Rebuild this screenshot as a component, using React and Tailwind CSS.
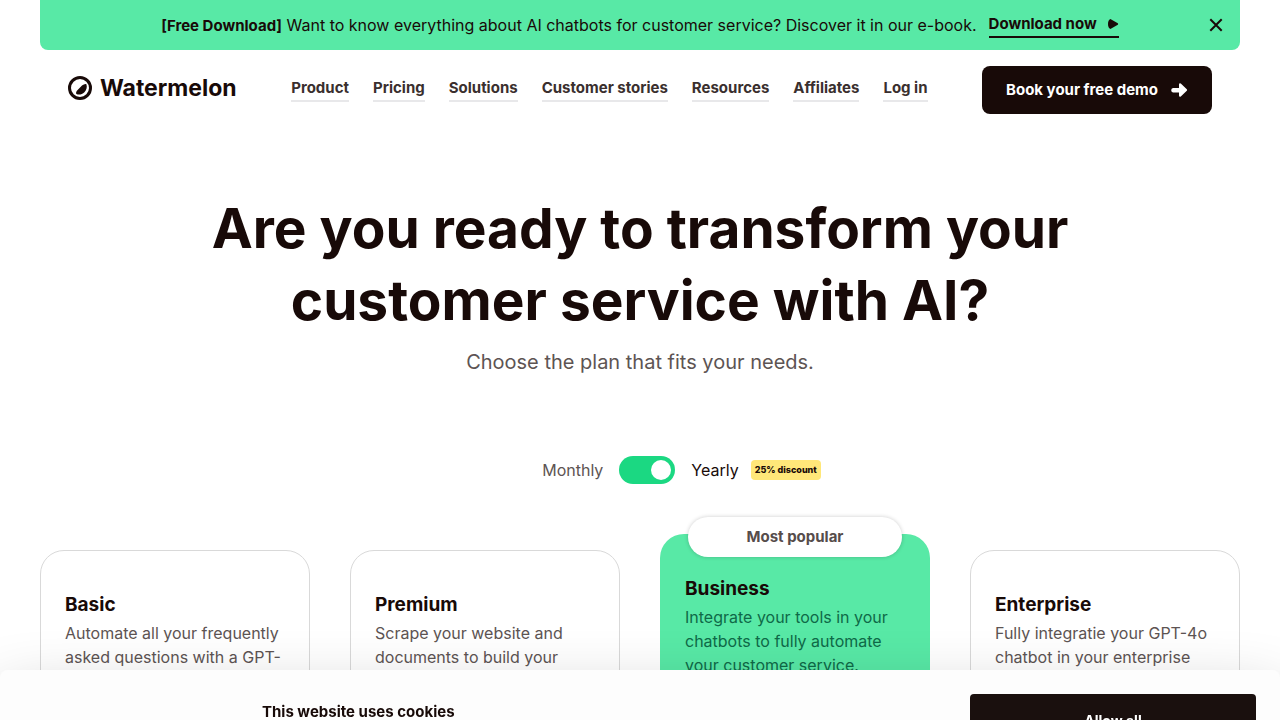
import { useState } from 'react';

const navLinks = ['Product', 'Pricing', 'Solutions', 'Customer stories', 'Resources', 'Affiliates', 'Log in'];

const plans = [
  { name: 'Basic', lines: ['Automate all your frequently', 'asked questions with a GPT-'] },
  { name: 'Premium', lines: ['Scrape your website and', 'documents to build your'] },
  { name: 'Business', lines: ['Integrate your tools in your', 'chatbots to fully automate', 'your customer service.'], popular: true },
  { name: 'Enterprise', lines: ['Fully integratie your GPT-4o', 'chatbot in your enterprise'] },
];

function Banner({ onClose }) {
  return (
    <div className="mx-10 h-[50px] flex items-center bg-[#58e9a6] rounded-b-lg px-4">
      <div className="flex-1 flex items-center justify-center gap-3 pl-4 whitespace-nowrap">
        <p className="text-base leading-6"><strong className="text-[15px] font-bold">[Free Download]</strong> Want to know everything about AI chatbots for customer service? Discover it in our e-book.</p>
        <a href="#download" className="flex items-center gap-2.5 font-bold text-[15px] leading-6 border-b-2 border-[#180a08]">
          Download now
          <svg width="12" height="12" viewBox="0 0 12 12" fill="currentColor" aria-hidden="true">
            <path d="M3.4 1 L10.8 5.3 Q11.6 6 10.8 6.7 L3.4 11 Q1 10 1 6 Q1 2 3.4 1Z" />
          </svg>
        </a>
      </div>
      <button type="button" aria-label="Close" onClick={onClose} className="w-4 h-4 flex items-center justify-center">
        <svg width="14" height="14" viewBox="0 0 14 14" stroke="currentColor" strokeWidth="2" aria-hidden="true">
          <path d="M1.3 1.3 L12.7 12.7 M12.7 1.3 L1.3 12.7" />
        </svg>
      </button>
    </div>
  );
}

function Header() {
  return (
    <header className="mx-10 px-7 py-4 flex items-center justify-between whitespace-nowrap">
      <a href="#home" className="flex items-center gap-2 pb-1">
        <svg width="24" height="24" viewBox="0 0 24 24" aria-hidden="true">
          <circle cx="12" cy="12" r="10.5" fill="none" stroke="#180a08" strokeWidth="3" />
          <path d="M18.4 8.2 C19.4 11 18.4 14.2 16.4 16.2 C14.2 18.4 11 19.2 8.4 18 C7.6 17 8.2 15.4 9.6 14 L14 9.6 C15.6 8.2 17.6 7.4 18.4 8.2Z" fill="#180a08" />
        </svg>
        <span className="text-[23px] leading-6 font-bold">Watermelon</span>
      </a>
      <nav className="flex gap-6 pb-0.5">
        {navLinks.map(link => (
          <a key={link} href="#nav" className="text-[15px] leading-6 font-bold text-[#3a2f2e] border-b-2 border-[#e8e8ea]">{link}</a>
        ))}
      </nav>
      <a href="#demo" className="h-12 px-6 flex items-center gap-3 rounded-lg bg-[#180a08] text-white font-bold text-[15px]">
        Book your free demo
        <svg width="18" height="16" viewBox="0 0 18 16" fill="currentColor" aria-hidden="true">
          <path d="M3 6 H9 V2.4 Q9.2 0.6 10.8 1.4 L16.8 7.3 Q17.5 8 16.8 8.7 L10.8 14.6 Q9.2 15.4 9 13.6 V10.4 H3 Q1.2 10.2 1.2 8.2 Q1.2 6.2 3 6Z" />
        </svg>
      </a>
    </header>
  );
}

function PlanCard({ plan }) {
  if (plan.popular) {
    return (
      <article className="relative -mt-4 rounded-3xl bg-[#58e9a6] px-[25px] pt-[39px] pb-24">
        <span className="absolute -top-[17px] inset-x-7 h-10 flex items-center justify-center rounded-full bg-white text-[#564c4b] font-bold text-[15px] shadow-[0_0_4px_rgba(0,0,0,0.2)]">Most popular</span>
        <h2 className="text-[19px] leading-8 font-bold">{plan.name}</h2>
        <p className="text-base leading-6 text-[#0f6a48] whitespace-nowrap">
          {plan.lines.map(line => <span key={line} className="block">{line}</span>)}
        </p>
      </article>
    );
  }
  return (
    <article className="rounded-3xl border border-[#d9d9d9] bg-white px-6 pt-[38px] pb-24">
      <h2 className="text-[19px] leading-8 font-bold">{plan.name}</h2>
      <p className="text-base leading-6 text-[#5d5453] whitespace-nowrap">
        {plan.lines.map(line => <span key={line} className="block">{line}</span>)}
      </p>
    </article>
  );
}

function CookieBar() {
  return (
    <section aria-label="Cookies" className="fixed inset-x-0 -bottom-48 h-[242px] rounded-t-lg bg-[#fdfdfd] shadow-[0_32px_68px_rgba(0,0,0,0.3)] px-6 pt-6">
      <div className="flex items-start justify-between">
        <h2 className="pl-[238px] pt-2 text-[15px] leading-5 font-bold">This website uses cookies</h2>
        <button type="button" className="w-[286px] h-[54px] rounded bg-[#1a100e] text-white text-sm font-bold">Allow all</button>
      </div>
    </section>
  );
}

export default function App() {
  const [showBanner, setShowBanner] = useState(true);
  const [yearly, setYearly] = useState(true);

  return (
    <div className="min-h-screen bg-white text-[#180a08] font-['Inter','Liberation_Sans',sans-serif]">
      {showBanner && <Banner onClose={() => setShowBanner(false)} />}
      <Header />
      <main className="px-10 pt-[62px]">
        <h1 className="mx-auto max-w-[920px] text-center text-[55px] leading-[72px] font-bold">
          Are you ready to transform your <br />customer service with AI?
        </h1>
        <p className="mt-3 text-center text-xl leading-7 text-[#5d5453]">Choose the plan that fits your needs.</p>

        <div className="mt-20 pl-[83px] flex items-center justify-center text-base">
          <span className="text-[#5d5453]">Monthly</span>
          <label className="relative mx-4 flex h-7 w-14 cursor-pointer">
            <input
              type="checkbox"
              aria-label="Yearly billing"
              checked={yearly}
              onChange={e => setYearly(e.target.checked)}
              className="peer h-7 w-14 appearance-none rounded-full bg-gray-300 checked:bg-[#1bd882]"
            />
            <span className="absolute left-1 top-1 size-5 rounded-full bg-white peer-checked:left-8" />
          </label>
          <span>Yearly</span>
          <span className="ml-3 h-5 px-1 flex items-center rounded bg-[#ffe779] text-[9px] font-extrabold">25% discount</span>
        </div>

        <div className="mt-[66px] grid grid-cols-4 items-start gap-10">
          {plans.map(plan => <PlanCard key={plan.name} plan={plan} />)}
        </div>
      </main>
      <CookieBar />
    </div>
  );
}
